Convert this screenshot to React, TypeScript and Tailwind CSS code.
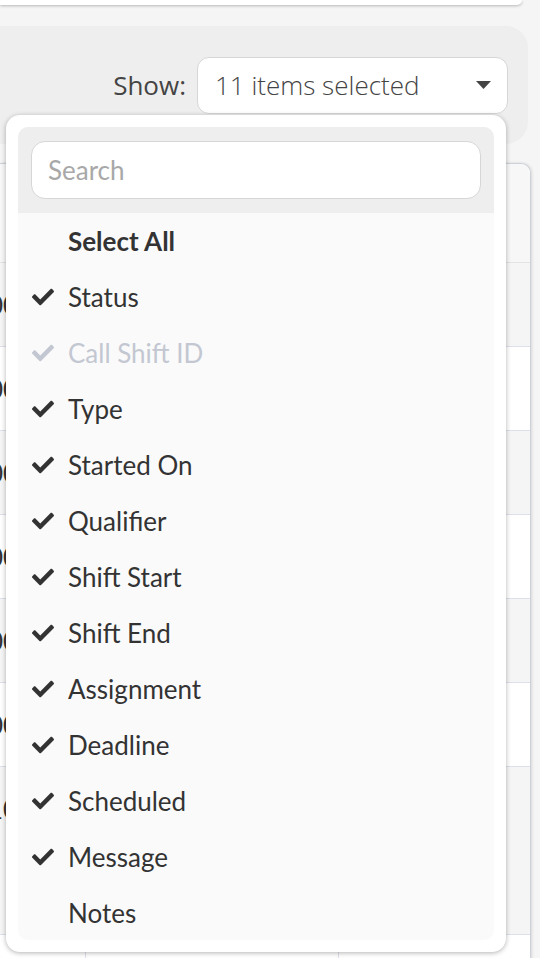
import React from "react";
import { FaCheck } from "react-icons/fa";

const items: { label: string; checked: boolean; disabled?: boolean }[] = [
  { label: "Status", checked: true },
  { label: "Call Shift ID", checked: true, disabled: true },
  { label: "Type", checked: true },
  { label: "Started On", checked: true },
  { label: "Qualifier", checked: true },
  { label: "Shift Start", checked: true },
  { label: "Shift End", checked: true },
  { label: "Assignment", checked: true },
  { label: "Deadline", checked: true },
  { label: "Scheduled", checked: true },
  { label: "Message", checked: true },
  { label: "Notes", checked: false },
];

const rows: { h: string; bg: string; t: string }[] = [
  { h: "h-[84px]", bg: "bg-[#f5f5f5]", t: "000" },
  { h: "h-[84px]", bg: "bg-white", t: "000" },
  { h: "h-[84px]", bg: "bg-[#f5f5f5]", t: "000" },
  { h: "h-[84px]", bg: "bg-white", t: "000" },
  { h: "h-[84px]", bg: "bg-[#f5f5f5]", t: "000" },
  { h: "h-[84px]", bg: "bg-white", t: "000" },
  { h: "h-[168px]", bg: "bg-[#f5f5f5]", t: "100" },
  { h: "h-[84px]", bg: "bg-white", t: "" },
];

export default function App() {
  return (
    <div className="relative w-[540px] h-[958px] overflow-hidden bg-[#f5f5f5] font-['Lato',sans-serif]">
      {/* top card remnant */}
      <div className="h-[5px] w-[522px] bg-white rounded-br-[14px] shadow-[0_1px_3px_rgba(0,0,0,0.25)]" />

      {/* filter panel */}
      <div className="mt-[21px] h-[118px] w-[528px] bg-[#eeeeee] rounded-r-[22px] flex items-center justify-end pr-[20px] gap-[11px]">
        <span className="font-['Open_Sans',sans-serif] text-[26px] text-[#444] leading-none">Show:</span>
        <div className="w-[311px] h-[57px] bg-white border border-[#d6d6d6] rounded-[12px] flex items-center justify-between pl-[17px] pr-[16px]">
          <span className="font-['Open_Sans',sans-serif] font-light text-[26px] text-[#444] leading-none">11 items selected</span>
          <svg width="15" height="8" viewBox="0 0 15 8">
            <polygon points="0,0 15,0 7.5,8" fill="#444" />
          </svg>
        </div>
      </div>

      {/* table behind */}
      <div className="mt-[19px] w-[531px] bg-white rounded-tr-[10px] border-r border-t border-[#cdd1da] shadow-[1px_0_3px_rgba(0,0,0,0.12)] overflow-hidden">
        <div className="h-[99px] bg-[#f7f7f7] border-b border-[#e3e3e3]" />
        {rows.map((r, i) => (
          <div key={i} className={`${r.h} ${r.bg} border-b border-[#dde0ea] flex`}>
            <div className="w-[86px] h-full border-r border-[#dde0ea] overflow-hidden pt-[24px]">
              <span className="block ml-[-12px] text-[26px] leading-[36px] text-[#333]">{r.t}</span>
            </div>
            <div className="w-[253px] h-full border-r border-[#dde0ea]" />
            <div className="flex-1 h-full" />
          </div>
        ))}
      </div>

      {/* dropdown menu */}
      <div className="absolute left-[6px] top-[115px] w-[500px] h-[837px] bg-white rounded-[14px] p-[12px] shadow-[0_1px_5px_rgba(0,0,0,0.3)]">
        <div className="h-full rounded-[10px] bg-[#fafafa] overflow-hidden">
          <div className="bg-[#eeeeee] px-[13px] pt-[14px] pb-[14px]">
            <div className="h-[58px] bg-white border border-[#d6d6d6] rounded-[14px] flex items-center pl-[16px]">
              <span className="text-[26px] text-[#a8a8a8] leading-none">Search</span>
            </div>
          </div>
          <div className="h-[56px] flex items-center pl-[50px]">
            <span className="text-[26px] font-bold text-[#333] leading-none">Select All</span>
          </div>
          {items.map((it) => (
            <div key={it.label} className="h-[56px] flex items-center pl-[14px]">
              <span className="w-[22px] flex items-center">
                {it.checked && (
                  <FaCheck className={`w-[22px] h-[22px] ${it.disabled ? "text-[#c3c7d1]" : "text-[#333]"}`} />
                )}
              </span>
              <span
                className={`ml-[14px] text-[26px] leading-none ${it.disabled ? "text-[#c3c7d1]" : "text-[#333]"}`}
              >
                {it.label}
              </span>
            </div>
          ))}
        </div>
      </div>
    </div>
  );
}
